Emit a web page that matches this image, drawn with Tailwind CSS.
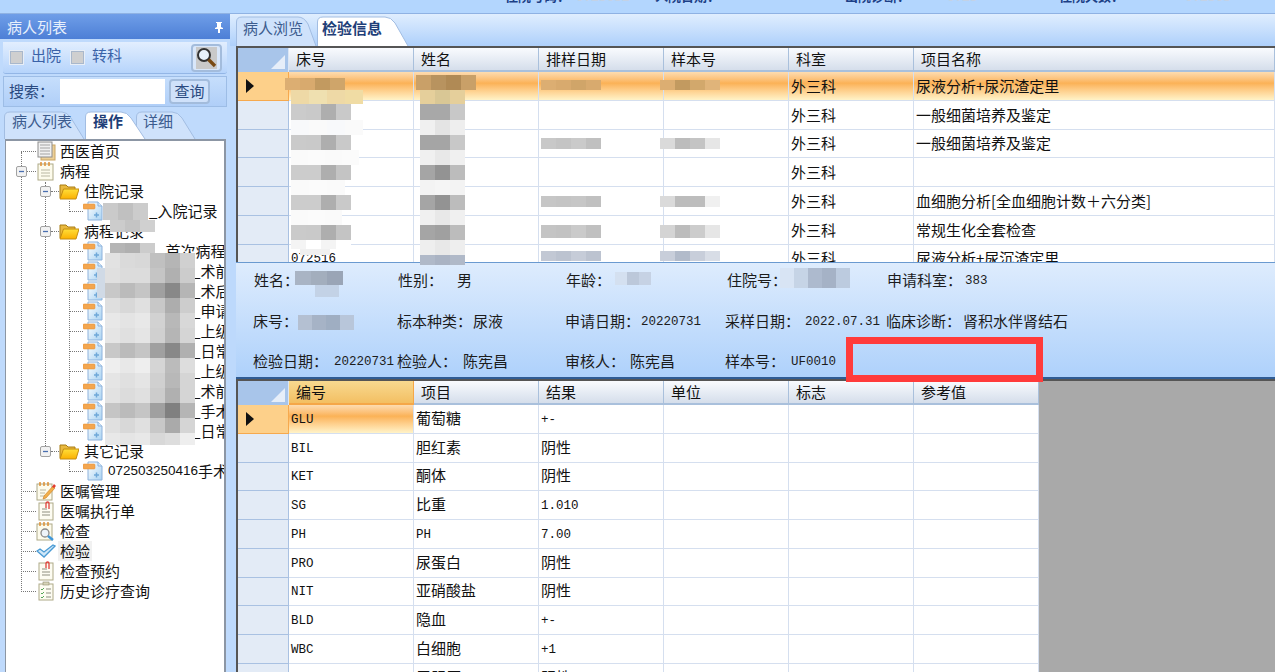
<!DOCTYPE html>
<html lang="zh-CN">
<head>
    <meta charset="UTF-8">
    <title>检验信息</title>
    <script src="https://cdn.jsdelivr.net/npm/@tailwindcss/browser@4"></script>
</head>
<body class="bg-[#bdd9fc]">
<div class="relative flex h-[672px] w-[1275px] flex-col overflow-hidden font-['Noto_Sans_CJK_SC',sans-serif] text-[15px] leading-5 text-[#111]">

    <!-- shared icons -->
    <svg class="absolute h-0 w-0">
        <defs>
            <linearGradient id="pageFill" x1="0" y1="0" x2="1" y2="1"><stop offset="0" stop-color="#ffffff"/><stop offset="1" stop-color="#a9d3f3"/></linearGradient>
            <linearGradient id="folderFill" x1="0" y1="0" x2="0" y2="1"><stop offset="0" stop-color="#ffdf3a"/><stop offset="1" stop-color="#fbb000"/></linearGradient>
        </defs>
        <symbol id="i-record" viewBox="0 0 20 20"><path d="M5 1h10l4 4v14H5z" fill="url(#pageFill)" stroke="#8db2dc"/><path d="M15 1v4h4" fill="#dcecfa" stroke="#8db2dc"/><rect x="0" y="3" width="12" height="5" rx="1" fill="#f3a650" stroke="#e58c2e" stroke-width=".5"/><path d="M11 14h5M13.500 11.500v5" stroke="#6fa8d8" stroke-width="1.500"/></symbol>
        <symbol id="i-folder" viewBox="0 0 20 18"><path d="M1 16V3h6l2 2h7v3" fill="#e9b93f" stroke="#a97c14"/><path d="M1 17 4.500 7H20l-3 10z" fill="url(#folderFill)" stroke="#c48d10"/></symbol>
        <symbol id="i-pages" viewBox="0 0 20 20"><rect x="5" y="4" width="14" height="15" fill="#eccf96" stroke="#c9a564"/><rect x="2" y="1" width="14" height="15" fill="#f1f1f1" stroke="#8d8d8d"/><path d="M4 4h10M4 7h10M4 10h10M4 13h10" stroke="#a3a3a3"/></symbol>
        <symbol id="i-notes" viewBox="0 0 20 20"><rect x="2" y="3" width="15" height="16" fill="#fdfbec" stroke="#aeaa88"/><path d="M5 1v4M9 1v4M13 1v4" stroke="#dd8a2a" stroke-width="1.400"/><path d="M5 9h9M5 12h9M5 15h9" stroke="#b9b7a2"/></symbol>
        <symbol id="i-pen" viewBox="0 0 20 20"><rect x="1" y="3" width="15" height="16" fill="#fdfbec" stroke="#aeaa88"/><path d="M4 1v4M8 1v4M12 1v4" stroke="#dd8a2a" stroke-width="1.400"/><path d="M4 9h6M4 12h5M4 15h5" stroke="#b9b7a2"/><path d="M8 15l9-10 2 2-9 10-3 1z" fill="#f2b04a" stroke="#c97a20" stroke-width=".6"/><path d="M16 6l2-3 2 2-2 2z" fill="#e23b30"/></symbol>
        <symbol id="i-clip" viewBox="0 0 20 20"><rect x="3" y="2" width="14" height="17" fill="#fdfcf2" stroke="#aeaa88"/><path d="M6 8h5M6 11h8M6 14h8" stroke="#8f8f80"/><path d="M10 7V2.500a1.500 1.500 0 0 1 3 0V8" fill="none" stroke="#e0403a" stroke-width="1.300"/></symbol>
        <symbol id="i-search" viewBox="0 0 20 20"><rect x="1" y="3" width="15" height="16" fill="#fdfbec" stroke="#aeaa88"/><path d="M4 1v4M8 1v4M12 1v4" stroke="#dd8a2a" stroke-width="1.400"/><circle cx="9" cy="12" r="4" fill="#eef4fa" stroke="#8a8a8a" stroke-width="1.300"/><path d="M12 15l5 4" stroke="#3f97da" stroke-width="2.400"/></symbol>
        <symbol id="i-check" viewBox="0 0 20 20"><path d="M1 10l3-2 4 3 9-7 2 1-11 11z" fill="#cfe7f8" stroke="#4a9bd4" stroke-width="1.300"/></symbol>
        <symbol id="i-list" viewBox="0 0 20 20"><rect x="3" y="3" width="14" height="16" fill="#fdfcf2" stroke="#aeaa88"/><rect x="7" y="1" width="6" height="3" fill="#d6d3b8" stroke="#8f8d70" stroke-width=".6"/><path d="M5 8l1 1 2-2M5 12l1 1 2-2M5 16l1 1 2-2" fill="none" stroke="#58a85a"/><path d="M10 8h5M10 12h5M10 16h5" stroke="#8f8f80"/></symbol>
        <symbol id="i-minus" viewBox="0 0 11 11"><rect x=".5" y=".5" width="10" height="10" rx="1.500" fill="#f2f2f2" stroke="#a2a2a2"/><path d="M3 5.500h5" stroke="#4a6fb0" stroke-width="1.300"/></symbol>
    </svg>

    <!-- window top edge -->
    <div class="flex h-[14px] shrink-0 items-start overflow-hidden border-b border-[#8fb2e3] bg-[#b3d6fe] pl-[505px] text-[13px] font-bold text-[#1c3f86]">
        <span class="-mt-[14px] w-[71px] shrink-0">住院号码：</span>
        <span class="-mt-[14px] w-[79px] shrink-0 text-[#c3d2e6]">0725032</span>
        <span class="-mt-[14px] w-[190px] shrink-0">入院日期：</span>
        <span class="-mt-[14px] w-[102px] shrink-0">出院诊断：</span>
        <span class="-mt-[14px] w-[112px] shrink-0 text-[#c3d2e6]">0725</span>
        <span class="-mt-[14px] w-[126px] shrink-0">住院天数：</span>
        <span class="-mt-[14px] shrink-0 text-[#c3d2e6]">072503</span>
    </div>

    <div class="flex min-h-0 flex-1">
        <!-- left panel -->
        <aside class="flex w-[230px] shrink-0 flex-col bg-[#bfdafc]">
            <div class="flex h-[25px] shrink-0 items-center justify-between bg-linear-to-b from-[#6f9ee8] to-[#4d7fd6] pl-[7px] pr-[6px] text-[#e8f0fc]">
                <span>病人列表</span>
                <svg width="10" height="12" viewBox="0 0 10 12"><path d="M2 1h6v1H7v4l2 1v1H6v4H4V8H1V7l2-1V2H2z" fill="#fff"/></svg>
            </div>
            <div class="mx-[3px] mt-[3px] flex h-[32px] shrink-0 items-center rounded-b-[3px] border-b border-[#93b6e6] bg-linear-to-b from-[#e2eefe] to-[#b6d4fb] pl-[7px] pr-[5px] text-[#3a62a8]">
                <span class="h-[13px] w-[13px] border border-[#a9b8cc] bg-[#cfcfcf] outline outline-[#e8eef6]"></span>
                <span class="ml-[8px] mb-[5px] w-[40px]">出院</span>
                <span class="h-[13px] w-[13px] border border-[#a9b8cc] bg-[#cfcfcf] outline outline-[#e8eef6]"></span>
                <span class="ml-[8px] mb-[5px]">转科</span>
                <span class="ml-auto flex h-[28px] w-[31px] items-center justify-center rounded-[4px] border-2 border-[#a3bcdc] bg-[#d9e7fa]">
                    <svg width="21" height="22" viewBox="0 0 21 22"><rect width="21" height="22" fill="#c9c9c9"/><circle cx="8" cy="8" r="6" fill="#e8f2fb" stroke="#333" stroke-width="2"/><path d="M12.500 12.500 19 19" stroke="#7a4a12" stroke-width="3.400"/></svg>
                </span>
            </div>
            <div class="mx-[3px] mt-[2px] flex h-[31px] shrink-0 items-center border border-[#9dbde6] bg-linear-to-b from-[#c6defc] to-[#b0cff8] pl-[5px] text-[#2a4a80]">
                <span class="mb-[2px] w-[51px]">搜索：</span>
                <span class="h-[25px] w-[105px] bg-white"></span>
                <span class="ml-[4px] flex h-[25px] w-[41px] items-center justify-center rounded-[4px] border-2 border-[#a3bcdc] bg-[#cfe1fa] pb-[2px]">查询</span>
            </div>
            <div class="flex h-[32px] shrink-0 items-end pl-[4px] text-[#3c5c8e]">
                <div class="relative flex h-[28px] w-[81px] items-center pb-[9px] pl-[8px]">
                    <svg class="absolute inset-0" width="81" height="28"><path d="M.5 28V6Q.5 1 6 1H58Q63 1 67 7L80 28" fill="#cfe2fb" stroke="#a2bde2"/></svg>
                    <span class="relative">病人列表</span>
                </div>
                <div class="relative z-10 flex h-[28px] w-[61px] items-center pb-[9px] pl-[8px] font-bold text-[#1f3f78]">
                    <svg class="absolute inset-0" width="61" height="28"><path d="M.5 28V6Q.5 1 6 1H36Q42 1 46 7L60 28" fill="#fff" stroke="#a2bde2"/></svg>
                    <span class="relative">操作</span>
                </div>
                <div class="relative -ml-[10px] flex h-[28px] w-[60px] items-center pb-[9px] pl-[7px]">
                    <svg class="absolute inset-0" width="60" height="28"><path d="M.5 28V6Q.5 1 6 1H36Q42 1 46 7L59 28" fill="#cfe2fb" stroke="#a2bde2"/></svg>
                    <span class="relative">详细</span>
                </div>
            </div>

            <!-- tree -->
            <div class="relative ml-[5px] mr-[4px] min-h-0 flex-1 overflow-hidden border-l border-r-2 border-t-2 border-l-[#8c96a4] border-r-[#8c96a4] border-t-[#8c96a4] bg-white">
                <div class="absolute left-[15px] top-[11px] h-[440px] border-l border-dotted border-[#777]"></div>
                <div class="absolute left-[39px] top-[41px] h-[270px] border-l border-dotted border-[#777]"></div>
                <div class="absolute left-[63px] top-[60px] h-[11px] border-l border-dotted border-[#777]"></div>
                <div class="absolute left-[63px] top-[100px] h-[191px] border-l border-dotted border-[#777]"></div>
                <div class="absolute left-[63px] top-[320px] h-[11px] border-l border-dotted border-[#777]"></div>

                <div class="relative flex h-5 items-center whitespace-nowrap pl-[15px]"><span class="w-[15px] shrink-0 border-t border-dotted border-[#777]"></span><svg class="mr-[4px] h-5 w-5 shrink-0"><use href="#i-pages"/></svg>西医首页</div>
                <div class="relative flex h-5 items-center whitespace-nowrap pl-[10px]"><svg class="h-[11px] w-[11px] shrink-0"><use href="#i-minus"/></svg><span class="w-[9px] shrink-0 border-t border-dotted border-[#777]"></span><svg class="mr-[4px] h-5 w-5 shrink-0"><use href="#i-notes"/></svg>病程</div>
                <div class="relative flex h-5 items-center whitespace-nowrap pl-[34px]"><svg class="h-[11px] w-[11px] shrink-0"><use href="#i-minus"/></svg><span class="w-[8px] shrink-0 border-t border-dotted border-[#777]"></span><svg class="mr-[5px] h-[18px] w-5 shrink-0"><use href="#i-folder"/></svg>住院记录</div>
                <div class="relative flex h-5 items-center whitespace-nowrap pl-[63px]"><span class="w-[14px] shrink-0 border-t border-dotted border-[#777]"></span><svg class="mr-[5px] h-5 w-5 shrink-0"><use href="#i-record"/></svg><span class="w-[41px] shrink-0"></span>_入院记录</div>
                <div class="relative flex h-5 items-center whitespace-nowrap pl-[34px]"><svg class="h-[11px] w-[11px] shrink-0"><use href="#i-minus"/></svg><span class="w-[8px] shrink-0 border-t border-dotted border-[#777]"></span><svg class="mr-[5px] h-[18px] w-5 shrink-0"><use href="#i-folder"/></svg>病程记录</div>
                <div class="relative flex h-5 items-center whitespace-nowrap pl-[63px]"><span class="w-[14px] shrink-0 border-t border-dotted border-[#777]"></span><svg class="mr-[5px] h-5 w-5 shrink-0"><use href="#i-record"/></svg><span class="w-[49px] shrink-0"></span>_首次病程记录</div>
                <div class="relative flex h-5 items-center whitespace-nowrap pl-[63px]"><span class="w-[14px] shrink-0 border-t border-dotted border-[#777]"></span><svg class="mr-[5px] h-5 w-5 shrink-0"><use href="#i-record"/></svg><span class="w-[84px] shrink-0"></span>_术前讨论</div>
                <div class="relative flex h-5 items-center whitespace-nowrap pl-[63px]"><span class="w-[14px] shrink-0 border-t border-dotted border-[#777]"></span><svg class="mr-[5px] h-5 w-5 shrink-0"><use href="#i-record"/></svg><span class="w-[84px] shrink-0"></span>_术后记录</div>
                <div class="relative flex h-5 items-center whitespace-nowrap pl-[63px]"><span class="w-[14px] shrink-0 border-t border-dotted border-[#777]"></span><svg class="mr-[5px] h-5 w-5 shrink-0"><use href="#i-record"/></svg><span class="w-[84px] shrink-0"></span>_申请单</div>
                <div class="relative flex h-5 items-center whitespace-nowrap pl-[63px]"><span class="w-[14px] shrink-0 border-t border-dotted border-[#777]"></span><svg class="mr-[5px] h-5 w-5 shrink-0"><use href="#i-record"/></svg><span class="w-[84px] shrink-0"></span>_上级查房</div>
                <div class="relative flex h-5 items-center whitespace-nowrap pl-[63px]"><span class="w-[14px] shrink-0 border-t border-dotted border-[#777]"></span><svg class="mr-[5px] h-5 w-5 shrink-0"><use href="#i-record"/></svg><span class="w-[84px] shrink-0"></span>_日常病程</div>
                <div class="relative flex h-5 items-center whitespace-nowrap pl-[63px]"><span class="w-[14px] shrink-0 border-t border-dotted border-[#777]"></span><svg class="mr-[5px] h-5 w-5 shrink-0"><use href="#i-record"/></svg><span class="w-[84px] shrink-0"></span>_上级查房</div>
                <div class="relative flex h-5 items-center whitespace-nowrap pl-[63px]"><span class="w-[14px] shrink-0 border-t border-dotted border-[#777]"></span><svg class="mr-[5px] h-5 w-5 shrink-0"><use href="#i-record"/></svg><span class="w-[84px] shrink-0"></span>_术前小结</div>
                <div class="relative flex h-5 items-center whitespace-nowrap pl-[63px]"><span class="w-[14px] shrink-0 border-t border-dotted border-[#777]"></span><svg class="mr-[5px] h-5 w-5 shrink-0"><use href="#i-record"/></svg><span class="w-[84px] shrink-0"></span>_手术记录</div>
                <div class="relative flex h-5 items-center whitespace-nowrap pl-[63px]"><span class="w-[14px] shrink-0 border-t border-dotted border-[#777]"></span><svg class="mr-[5px] h-5 w-5 shrink-0"><use href="#i-record"/></svg><span class="w-[84px] shrink-0"></span>_日常病程</div>
                <div class="relative flex h-5 items-center whitespace-nowrap pl-[34px]"><svg class="h-[11px] w-[11px] shrink-0"><use href="#i-minus"/></svg><span class="w-[8px] shrink-0 border-t border-dotted border-[#777]"></span><svg class="mr-[5px] h-[18px] w-5 shrink-0"><use href="#i-folder"/></svg>其它记录</div>
                <div class="relative flex h-5 items-center whitespace-nowrap pl-[63px]"><span class="w-[14px] shrink-0 border-t border-dotted border-[#777]"></span><svg class="mr-[5px] h-5 w-5 shrink-0"><use href="#i-record"/></svg><span class="font-['Liberation_Sans'] text-[13.500px]">072503250416</span>手术记录</div>
                <div class="relative flex h-5 items-center whitespace-nowrap pl-[15px]"><span class="w-[15px] shrink-0 border-t border-dotted border-[#777]"></span><svg class="mr-[4px] h-5 w-5 shrink-0"><use href="#i-pen"/></svg>医嘱管理</div>
                <div class="relative flex h-5 items-center whitespace-nowrap pl-[15px]"><span class="w-[15px] shrink-0 border-t border-dotted border-[#777]"></span><svg class="mr-[4px] h-5 w-5 shrink-0"><use href="#i-clip"/></svg>医嘱执行单</div>
                <div class="relative flex h-5 items-center whitespace-nowrap pl-[15px]"><span class="w-[15px] shrink-0 border-t border-dotted border-[#777]"></span><svg class="mr-[4px] h-5 w-5 shrink-0"><use href="#i-search"/></svg>检查</div>
                <div class="relative flex h-5 items-center whitespace-nowrap pl-[15px]"><span class="w-[15px] shrink-0 border-t border-dotted border-[#777]"></span><svg class="mr-[2px] h-5 w-5 shrink-0"><use href="#i-check"/></svg><span class="bg-[#f1f1f1] px-[2px]">检验</span></div>
                <div class="relative flex h-5 items-center whitespace-nowrap pl-[15px]"><span class="w-[15px] shrink-0 border-t border-dotted border-[#777]"></span><svg class="mr-[4px] h-5 w-5 shrink-0"><use href="#i-clip"/></svg>检查预约</div>
                <div class="relative flex h-5 items-center whitespace-nowrap pl-[15px]"><span class="w-[15px] shrink-0 border-t border-dotted border-[#777]"></span><svg class="mr-[4px] h-5 w-5 shrink-0"><use href="#i-list"/></svg>历史诊疗查询</div>
            </div>
        </aside>

        <!-- right panel -->
        <main class="flex min-w-0 flex-1 flex-col pl-[6px]">
            <div class="-ml-[6px] flex h-[32px] shrink-0 items-end bg-linear-to-b from-[#e0eefe] to-[#aed0fb] pl-[6px] text-[#3c5c8e]">
                <div class="relative flex h-[30px] w-[81px] items-center pb-[6px] pl-[7px]">
                    <svg class="absolute inset-0" width="81" height="30"><path d="M.5 30V6Q.5 1 6 1H62Q68 1 72 8L80 30" fill="#cfe2fb" stroke="#a2bde2"/></svg>
                    <span class="relative">病人浏览</span>
                </div>
                <div class="relative flex h-[30px] w-[92px] items-center pb-[6px] pl-[5px] font-bold text-[#1f3f78]">
                    <svg class="absolute inset-0" width="92" height="30"><path d="M.5 30V6Q.5 1 6 1H68Q74 1 78 7L91 30" fill="#fff" stroke="#a2bde2"/></svg>
                    <span class="relative">检验信息</span>
                </div>
            </div>

            <section id="labGrid" class="h-[216px] shrink-0 overflow-hidden border-l-2 border-t-2 border-[#555] bg-white"></section>

            <!-- specimen details -->
            <div class="h-[117px] shrink-0 border-b-2 border-t border-b-[#2f5c94] border-t-[#6a9ad0] bg-linear-to-b from-[#deecfd] to-[#aed1fb] text-[#1c1c1c]">
                <div class="flex h-[34px] items-center whitespace-nowrap pl-[18px]">
                    <span class="w-[144px] shrink-0">姓名：</span><span class="w-[59px] shrink-0">性别：</span><span class="w-[109px] shrink-0">男</span><span class="w-[161px] shrink-0">年龄：</span><span class="w-[160px] shrink-0">住院号：</span><span class="w-[78px] shrink-0">申请科室：</span><span class="pt-[2px] font-['Liberation_Mono'] text-[12.500px]">383</span>
                </div>
                <div class="flex h-[48px] items-center whitespace-nowrap pl-[17px]">
                    <span class="w-[144px] shrink-0">床号：</span><span class="w-[76px] shrink-0">标本种类：</span><span class="w-[92px] shrink-0">尿液</span><span class="w-[76px] shrink-0">申请日期：</span><span class="w-[84px] shrink-0 pt-[2px] font-['Liberation_Mono'] text-[12.500px]">20220731</span><span class="w-[80px] shrink-0">采样日期：</span><span class="w-[81px] shrink-0 pt-[2px] font-['Liberation_Mono'] text-[12.500px]">2022.07.31</span><span class="w-[77px] shrink-0">临床诊断：</span><span>肾积水伴肾结石</span>
                </div>
                <div class="flex h-[32px] items-center whitespace-nowrap pl-[17px]">
                    <span class="w-[81px] shrink-0">检验日期：</span><span class="w-[63px] shrink-0 pt-[2px] font-['Liberation_Mono'] text-[12.500px]">20220731</span><span class="w-[66px] shrink-0">检验人：</span><span class="w-[102px] shrink-0">陈宪昌</span><span class="w-[65px] shrink-0">审核人：</span><span class="w-[95px] shrink-0">陈宪昌</span><span class="w-[66px] shrink-0">样本号：</span><span class="pt-[2px] font-['Liberation_Mono'] text-[12.500px]">UF0010</span>
                </div>
            </div>

            <section class="flex min-h-0 flex-1 overflow-hidden border-l-2 border-t-2 border-[#555] bg-[#a9a9a9]">
                <div id="itemGrid" class="w-[801px] shrink-0 bg-white"></div>
            </section>
        </main>
    </div>

    <!-- blurred patient data -->
    <svg id="mosaic" class="pointer-events-none absolute inset-0 z-20" width="1275" height="672"></svg>

    <!-- red annotation box -->
    <div class="absolute left-[846px] top-[337px] z-30 h-[45px] w-[197px] border-[7px] border-[#ff3b3b]"></div>
</div>

<script>
    const mono = "pt-[2px] font-['Liberation_Mono'] text-[12.500px]";
    const cornerCell = '<div class="relative h-full w-[51px] shrink-0 border-r border-[#dbe6f5] bg-[#a8c5ea]"><svg class="absolute bottom-[3px] right-[3px]" width="14" height="14"><path d="M14 0V14H0z" fill="#e6eef9"/></svg></div>';
    const arrow = '<svg width="8" height="14" viewBox="0 0 8 14"><path d="M0 0l8 7-8 7z" fill="#111"/></svg>';

    function headerRow(names, lastWide) {
        const cells = names.map((name, i) => {
            const hot = name === '编号';
            const tone = hot
                ? 'border-[#f5a748] from-[#f8d98f] to-[#f3bf62]'
                : 'border-[#a9c0dc] from-[#f9fbfe] to-[#d5deeb]';
            const width = lastWide && i === names.length - 1 ? 'flex-1' : 'w-[125px] shrink-0';
            return `<div class="flex h-full items-center border-b-2 border-r bg-linear-to-b pl-[7px] ${tone} ${width}">${name}</div>`;
        }).join('');
        return `<div class="flex h-6 shrink-0">${cornerCell}${cells}</div>`;
    }

    function bodyRow(values, opts) {
        const head = opts.selected
            ? `<div class="flex h-full w-[51px] shrink-0 items-center border-b border-r border-[#f6a94e] bg-[#fdd08a] pl-[8px]">${arrow}</div>`
            : '<div class="h-full w-[51px] shrink-0 border-b border-r border-b-[#a9c1e2] border-r-[#a9c1e2] bg-[#e3ebf6]"></div>';
        const cells = values.map((value, i) => {
            const hot = opts.selected && (opts.full || i === 0);
            const tone = hot ? 'bg-linear-to-b from-[#fddcb0] via-[#fbb256] via-40% to-[#fff3c8]' : 'bg-white';
            const width = opts.lastWide && i === values.length - 1 ? 'flex-1' : 'w-[125px] shrink-0';
            const isAscii = /^[\x00-\x7f]+$/.test(value);
            const lift = opts.lift && !isAscii ? 'pb-[2px]' : '';
            return `<div class="flex h-full items-center overflow-hidden whitespace-nowrap border-b border-r border-[#d5dfef] pl-[2px] ${tone} ${width} ${lift} ${isAscii ? mono : ''}">${value}</div>`;
        }).join('');
        return `<div class="flex h-[28.750px]">${head}${cells}</div>`;
    }

    const labRows = [
        ['', '', '', '', '外三科', '尿液分析+尿沉渣定里'],
        ['', '', '', '', '外三科', '一般细菌培养及鉴定'],
        ['', '', '', '', '外三科', '一般细菌培养及鉴定'],
        ['', '', '', '', '外三科', ''],
        ['', '', '', '', '外三科', '血细胞分析[全血细胞计数＋六分类]'],
        ['', '', '', '', '外三科', '常规生化全套检查'],
        ['072516', '', '', '', '外三科', '尿液分析+尿沉渣定里']
    ];
    document.getElementById('labGrid').innerHTML =
        headerRow(['床号', '姓名', '排样日期', '样本号', '科室', '项目名称'], true) +
        labRows.map((r, i) => bodyRow(r, { selected: i === 0, full: true, lastWide: true })).join('');

    const itemRows = [
        ['GLU', '葡萄糖', '+-'], ['BIL', '胆红素', '阴性'], ['KET', '酮体', '阴性'], ['SG', '比重', '1.010'],
        ['PH', 'PH', '7.00'], ['PRO', '尿蛋白', '阴性'], ['NIT', '亚硝酸盐', '阴性'], ['BLD', '隐血', '+-'],
        ['WBC', '白细胞', '+1'], ['URO', '尿胆原', '阴性']
    ];
    document.getElementById('itemGrid').innerHTML =
        headerRow(['编号', '项目', '结果', '单位', '标志', '参考值'], false) +
        itemRows.map((r, i) => bodyRow([r[0], r[1], r[2], '', '', ''], { selected: i === 0, full: false, lift: true })).join('');

    // mosaic strips: x, y, cell width, height, colours
    const strips = [
        // bed column
        [285, 78, 15, 12, ['#dcae72', '#d8aa6e', '#c29a60', '#cfa56a']], [291, 90, 18, 14, ['#eed9a6', '#efe0b0', '#eed9a6', '#f0dca4']],
        [291, 104, 15, 16, ['#cbcbcb', '#c9c9c9', '#aeaeae', '#c9c9c9']], [291, 120, 18, 15, ['#f8f9fb', '#fafafa', '#f8f9fb', '#fafafa']],
        [291, 135, 15, 15, ['#cacaca', '#c9c9c9', '#aeaeae', '#c9c9c9']], [291, 150, 17, 15, ['#fafafa', '#fbfbfb', '#fafafa', '#fbfbfb']],
        [291, 165, 15, 15, ['#cccccc', '#cccccc', '#aeaeae', '#c4c4c4']], [291, 180, 18, 15, ['#fafafa', '#fbfbfb', '#fafafa']],
        [291, 195, 15, 15, ['#cccccc', '#cccccc', '#aeaeae', '#c9c9c9']], [291, 210, 17, 15, ['#fafafa', '#fbfbfb', '#fafafa']],
        [291, 225, 15, 15, ['#cacaca', '#c9c9c9', '#aeaeae', '#c4c4c4']], [291, 240, 15, 9, ['#f4f4f4', '#ffffff', '#f4f4f4', '#ffffff']],
        [300, 249, 15, 6, ['#f0f0f0', '#f0f0f0']],
        // name column
        [416, 75, 15, 15, ['#c9a068', '#b8935f', '#b08a55', '#c9a068']], [420, 90, 15, 14, ['#e5cf9b', '#d9c795', '#e5cf9b']],
        [420, 104, 15, 16, ['#a8a8a8', '#a8a8a8', '#c8c8c8']], [420, 120, 15, 15, ['#f0f0f0', '#e4e4e4', '#eeeeee']],
        [420, 135, 15, 15, ['#a5a5a5', '#a5a5a5', '#c8c8c8']], [420, 150, 15, 15, ['#f0f0f0', '#e8e8e8', '#f0f0f0']],
        [420, 165, 15, 15, ['#a5a5a5', '#939393', '#bcbcbc']], [420, 180, 15, 15, ['#f3f3f3', '#f5f5f5', '#f3f3f3']],
        [420, 195, 15, 15, ['#a5a5a5', '#939393', '#bcbcbc']], [420, 210, 15, 15, ['#f0f0f0', '#e8e8e8', '#f0f0f0']],
        [420, 225, 15, 15, ['#a5a5a5', '#a0a0a0', '#bcbcbc']], [420, 240, 15, 15, ['#eeeeee', '#e8e8e8', '#eeeeee']],
        [420, 255, 15, 10, ['#b0b9c8', '#aab3c3', '#b0b9c8']],
        // sample date column
        [541, 80, 15, 10, ['#dcae72', '#d8aa6e', '#d0a569', '#d8aa6e']], [541, 138, 15, 11, ['#c8c8c8', '#c4c4c4', '#cacaca', '#c0c0c0']],
        [541, 196, 15, 11, ['#c6c6c6', '#c4c4c4', '#c6c6c6', '#c0c0c0']], [541, 225, 15, 13, ['#c4c4c4', '#c2c2c2', '#cacaca', '#c0c0c0']],
        [541, 251, 15, 10, ['#c2c8d4', '#bcc3d0', '#c6ccd8', '#bcc3d0']],
        // sample number column
        [660, 80, 15, 10, ['#dcae72', '#c29a60', '#d2a86c', '#e0b47a']], [660, 138, 15, 11, ['#dadada', '#bcbcbc', '#c4c4c4', '#e6e6e6']],
        [660, 196, 15, 11, ['#dadada', '#bcbcbc', '#bdbdbd', '#f0f0f0']], [660, 225, 15, 13, ['#d4d4d4', '#bcbcbc', '#cccccc', '#e6e6e6']],
        [660, 251, 15, 10, ['#c8ceda', '#b2bbca', '#c8ceda', '#d8dde6']],
        // detail panel
        [295, 271, 16, 14, ['#a9b4c4', '#a3aebd', '#9aa5b6']], [315, 285, 12, 12, ['#c3d2e6', '#c3d2e6']],
        [298, 315, 14, 15, ['#b4c0d2', '#a6b3c6', '#9faec2', '#b8c6da']], [615, 272, 12, 13, ['#d4e0f0', '#bcc8da', '#c6d2e4']],
        [780, 268, 14, 20, ['#d8e4f4', '#c6d4e6', '#adbace', '#a5b2c6', '#bccbdf']],
        // tree
        [103, 203, 15, 17, ['#cacaca', '#c0c0c0', '#cccccc']], [110, 220, 15, 12, ['#cccccc', '#c4c4c4', '#d0d0d0']], [110, 243, 15, 10, ['#b5b5b5', '#b0b0b0', '#cccccc']],
        [97, 268, 8, 30, ['#d0dae6']],
        ...[
            ['#e2e2e2', '#dadada', '#d8d8d8', '#c0c0c0', '#b5b5b5', '#d0d0d0'],
            ['#e0e0e0', '#dcdcdc', '#dcdcdc', '#c5c5c5', '#b0b0b0', '#cccccc'],
            ['#c8c8c8', '#bbbbbb', '#c5c5c5', '#a0a0a0', '#888888', '#b5b5b5'],
            ['#dfdfdf', '#d8d8d8', '#e0e0e0', '#c8c8c8', '#adadad', '#cdcdcd'],
            ['#e8e8e8', '#e4e4e4', '#e8e8e8', '#d2d2d2', '#b8b8b8', '#d8d8d8'],
            ['#e5e5e5', '#e0e0e0', '#e5e5e5', '#d0d0d0', '#b5b5b5', '#d5d5d5'],
            ['#c8c8c8', '#bbbbbb', '#c5c5c5', '#a0a0a0', '#888888', '#b0b0b0'],
            ['#eeeeee', '#e8e8e8', '#eeeeee', '#d5d5d5', '#bbbbbb', '#dddddd'],
            ['#e5e5e5', '#e0e0e0', '#e5e5e5', '#d0d0d0', '#b8b8b8', '#d5d5d5'],
            ['#e2e2e2', '#dcdcdc', '#e0e0e0', '#cccccc', '#b0b0b0', '#d5d5d5'],
            ['#c5c5c5', '#bbbbbb', '#c5c5c5', '#a0a0a0', '#808080', '#b5b5b5'],
            ['#e0e0e0', '#d8d8d8', '#e0e0e0', '#c8c8c8', '#aaaaaa', '#d5d5d5'],
            ['#e8e8e8', '#e5e5e5', '#e8e8e8', '#d8d8d8', '#dddddd', '#eeeeee']
        ].map((colours, i) => [105, 253 + i * 15, 15, i === 12 ? 12 : 15, colours])
    ];
    document.getElementById('mosaic').innerHTML = strips.map(([x, y, w, h, colours]) =>
        colours.map((c, i) => `<rect x="${x + i * w}" y="${y}" width="${w}" height="${h}" fill="${c}"/>`).join('')
    ).join('');
</script>
</body>
</html>
